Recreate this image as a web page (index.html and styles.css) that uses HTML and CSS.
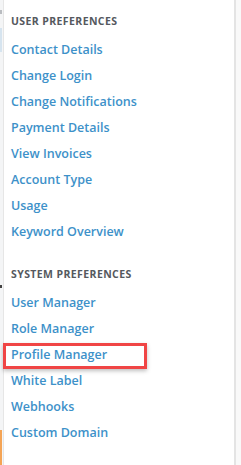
FILE: index.html
```html
<!DOCTYPE html>
<html lang="en">
<head>
  <meta charset="UTF-8" />
  <meta name="viewport" content="width=device-width, initial-scale=1.0"/>
  <title>Preferences</title>
  <link rel="stylesheet" href="styles.css">
</head>
<body>

<div class="page">
  <div class="edge">
    <span class="edge-grey"></span>
    <span class="edge-blue"></span>
    <span class="edge-dot"></span>
    <span class="edge-orange"></span>
  </div>

  <nav class="menu">
    <div class="menu-section">
      <h3>User Preferences</h3>
      <a href="#">Contact Details</a>
      <a href="#">Change Login</a>
      <a href="#">Change Notifications</a>
      <a href="#">Payment Details</a>
      <a href="#">View Invoices</a>
      <a href="#">Account Type</a>
      <a href="#">Usage</a>
      <a href="#">Keyword Overview</a>
    </div>

    <div class="menu-section">
      <h3>System Preferences</h3>
      <a href="#">User Manager</a>
      <a href="#">Role Manager</a>
      <a href="#" class="highlight">Profile Manager</a>
      <a href="#">White Label</a>
      <a href="#">Webhooks</a>
      <a href="#">Custom Domain</a>
    </div>
  </nav>

  <div class="side"></div>
</div>

</body>
</html>
```

FILE: styles.css
```css
body {
  margin: 0;
  padding: 0;
  font-family: 'Open Sans', 'Noto Sans', sans-serif;
  background: #f4f5f6;
}

.page {
  display: flex;
  height: 465px;
}

.edge {
  width: 3px;
  display: flex;
  flex-direction: column;
}

.edge span {
  display: block;
  width: 2px;
}

.edge-grey {
  height: 4px;
  margin-top: 10px;
  background: #b9bcc0;
}

.edge-blue {
  height: 24px;
  margin-top: 14px;
  background: #d6e4ef;
}

.edge-dot {
  height: 3px;
  margin-top: 233px;
  background: #444;
}

.edge-orange {
  flex-grow: 1;
  margin-top: 142px;
  background: #f4a455;
}

.menu {
  width: 230px;
  background: #fff;
  border-left: 1px solid #e6e6e6;
  border-right: 2px solid #e4e4e4;
  padding-top: 14px;
}

.menu-section {
  margin-bottom: 22px;
}

.menu-section h3 {
  margin: 0 0 9px 7px;
  font-size: 10.5px;
  font-weight: 700;
  color: #55595e;
  text-transform: uppercase;
  letter-spacing: 0.4px;
  line-height: 14px;
}

.menu-section a {
  display: block;
  padding: 5px 8px 5px 7px;
  font-size: 12.5px;
  font-weight: 600;
  line-height: 16px;
  color: #3d91c9;
  text-decoration: none;
}

/* annotation box round one entry */
.menu-section a.highlight {
  width: 144px;
  box-sizing: border-box;
  margin: 1px 0 -1px -1px;
  padding: 1px 5px 3px 5px;
  border: 3px solid #f04545;
  box-shadow: 0 2px 4px rgba(0, 0, 0, 0.25);
}

.side {
  flex-grow: 1;
  background: #f9f9f9;
}
```
